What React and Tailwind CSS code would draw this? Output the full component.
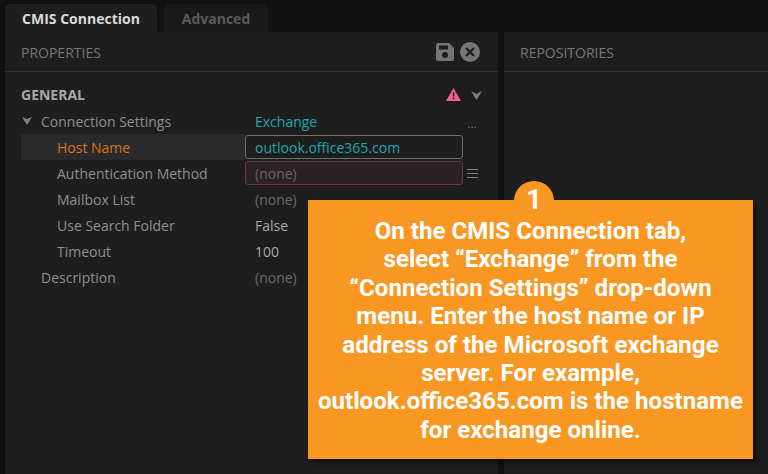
import React from "react";

const Row = ({ label, value, labelCls = "text-[#8f8f8f]", valueCls = "text-[#6b6b6b]", indent = "pl-[36px]", children, rowCls = "" }) => (
  <div className="flex h-[26px] items-center">
    <div className={`flex h-[26px] w-[224px] items-center ${indent} ${rowCls} ${labelCls}`}>{label}</div>
    <div className={`flex-1 pl-[10px] ${valueCls}`}>{value}</div>
    {children}
  </div>
);

export default function App() {
  return (
    <div className="relative h-[474px] w-[768px] overflow-hidden bg-[#111111] font-['Open_Sans','Noto_Sans',sans-serif] text-[14px]">
      <div className="flex h-[32px] pl-[5px] pt-[4px]">
        <div className="flex h-[28px] w-[152px] items-center justify-center rounded-t-[5px] bg-[#1f1f1f] text-[14px] font-bold text-[#d9d9d9]">CMIS Connection</div>
        <div className="ml-[7px] flex h-[28px] w-[104px] items-center justify-center rounded-t-[5px] bg-[#191919] text-[14px] font-bold text-[#5c5c5c]">Advanced</div>
      </div>
      <div className="flex h-[442px] gap-[6px] pl-[5px]">
        <div className="h-full w-[493px] bg-[#1e1e1e]">
          <div className="flex h-[40px] items-center justify-between border-b border-[#333333] pl-[16px] pr-[18px] pt-[2px] text-[#767676]">
            <span>PROPERTIES</span>
            <div className="-mt-[2px] flex items-center gap-[6px]">
              <svg width="18" height="18" viewBox="0 0 18 18" className="block">
                <path d="M2 0h11l5 5v11a2 2 0 0 1-2 2H2a2 2 0 0 1-2-2V2a2 2 0 0 1 2-2z" fill="#757575" />
                <rect x="3" y="2.500" width="9" height="4" fill="#1e1e1e" />
                <circle cx="9" cy="12" r="3" fill="#1e1e1e" />
              </svg>
              <svg width="20" height="20" viewBox="0 0 20 20" className="block">
                <circle cx="10" cy="10" r="10" fill="#757575" />
                <path d="M6 6l8 8M14 6l-8 8" stroke="#1e1e1e" strokeWidth="2.400" />
              </svg>
            </div>
          </div>
          <div className="flex h-[36px] items-center pl-[16px] pr-[16px] pt-[9px]">
            <span className="flex-1 font-bold text-[#a8a8a8]">GENERAL</span>
            <svg width="15" height="13" viewBox="0 0 15 13" className="mr-[10px] block">
              <path d="M7.500 0L15 13H0z" fill="#f0648c" />
              <rect x="6.800" y="4" width="1.600" height="4.500" fill="#1e1e1e" />
              <rect x="6.800" y="9.500" width="1.600" height="1.600" fill="#1e1e1e" />
            </svg>
            <svg width="11" height="9" viewBox="0 0 11 9" className="mt-[2px] block"><path d="M0 0l5.500 3L11 0 5.500 9z" fill="#808080" /></svg>
          </div>
          <div className="pl-[16px]">
            <Row label={<><svg width="10" height="8" viewBox="0 0 10 8" className="mr-[9px] block"><path d="M0 0l5 2 5-2-5 8z" fill="#808080" /></svg>Connection Settings</>} indent="pl-[1px]" value="Exchange" valueCls="text-[#1fa8b4]">
              <span className="mr-[21px] mt-[5px] text-[10px] leading-none tracking-[0.500px] text-[#8a8a8a]">...</span>
            </Row>
            <Row label="Host Name" labelCls="text-[#d9731f]" rowCls="bg-[#2a2a2a]" value="">
              <div className="absolute left-[245px] top-[135px] flex h-[24px] w-[218px] items-center rounded-[3px] border border-[#6e6e6e] bg-[#1e1e1e] pl-[9px] text-[#1fa8b4]">outlook.office365.com</div>
            </Row>
            <Row label="Authentication Method" value="">
              <div className="absolute left-[245px] top-[161px] flex h-[24px] w-[218px] items-center rounded-[3px] border border-[#6b3546] bg-[#2a2225] pl-[9px] text-[#666666]">(none)</div>
              <svg width="11" height="9" viewBox="0 0 11 9" className="mr-[20px] mt-[1px] block"><path d="M0 .500h11M0 4.500h11M0 8.500h11" stroke="#808080" /></svg>
            </Row>
            <Row label="Mailbox List" value="(none)" />
            <Row label="Use Search Folder" value="False" valueCls="text-[#a8a8a8]" />
            <Row label="Timeout" value="100" valueCls="text-[#a8a8a8]" />
            <Row label="Description" indent="pl-[20px]" value="(none)" />
          </div>
        </div>
        <div className="h-full flex-1 bg-[#1e1e1e]">
          <div className="flex h-[40px] items-center border-b border-[#333333] pl-[16px] pt-[2px] text-[#767676]">REPOSITORIES</div>
        </div>
      </div>
      <div className="absolute left-[514px] top-[181px] h-[40px] w-[40px] rounded-full bg-[#f99723]" />
      <div className="absolute left-[308px] top-[200px] flex h-[259px] w-[445px] flex-col bg-[#f99723] pt-[17px] text-center font-['Roboto',sans-serif] text-[24.100px] font-bold leading-[28.400px] text-white shadow-[4px_4px_4px_rgba(0,0,0,0.45)]">
        <div>On the CMIS Connection tab,</div>
        <div>select “Exchange” from the</div>
        <div>“Connection Settings” drop-down</div>
        <div>menu. Enter the host name or IP</div>
        <div>address of the Microsoft exchange</div>
        <div>server. For example,</div>
        <div>outlook.office365.com is the hostname</div>
        <div>for exchange online.</div>
      </div>
      <div className="absolute left-[514px] top-[185px] w-[40px] text-center font-['Roboto',sans-serif] text-[27px] font-bold leading-[30px] text-white">1</div>
    </div>
  );
}
